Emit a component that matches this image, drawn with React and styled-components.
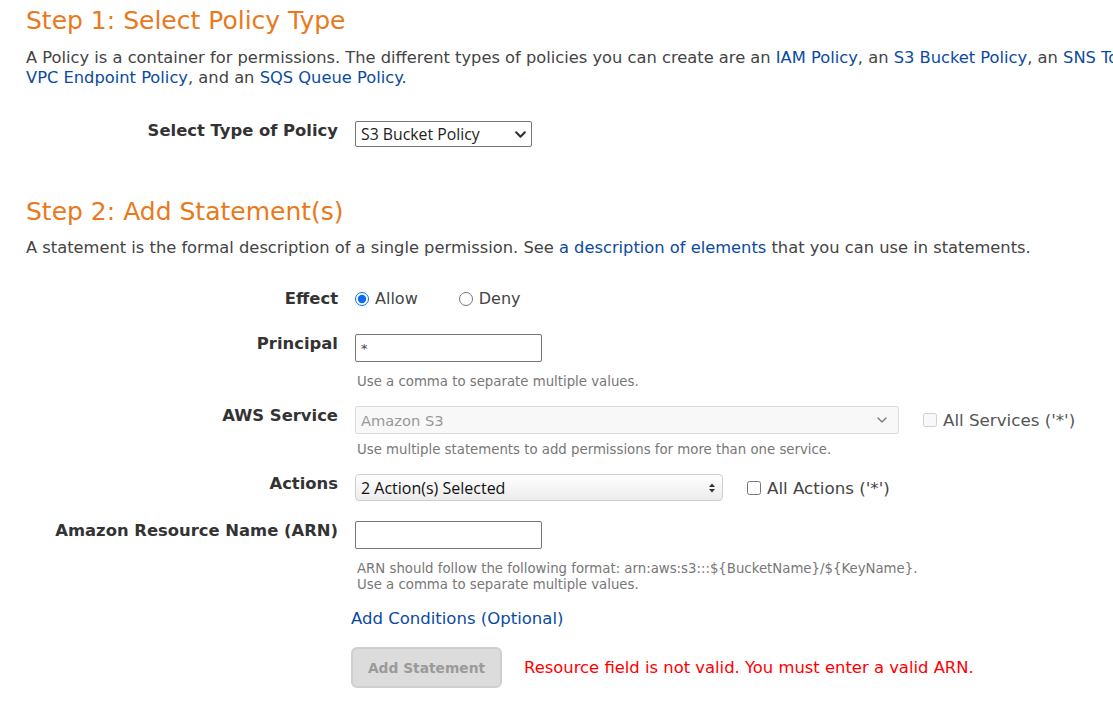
import React from "react";
import styled, { createGlobalStyle } from "styled-components";

const GlobalStyle = createGlobalStyle`
  html, body {
    margin: 0;
    padding: 0;
    overflow: hidden;
    background: #fff;
  }
  body {
    font-family: "DejaVu Sans", Verdana, sans-serif;
    color: #444;
  }
`;

const Page = styled.div`
  width: 1195px;
  padding: 6px 0 0 26px;
`;

const Heading = styled.h2`
  margin: ${(p) => p.$top || 0}px 0 0;
  font-size: 25px;
  line-height: 30px;
  font-weight: normal;
  color: #e8791c;
`;

const Para = styled.p`
  margin: ${(p) => p.$top || 0}px 0 0;
  font-size: 16.3px;
  line-height: 20px;
  color: #444;
`;

const Link = styled.a`
  color: #0b4aa2;
  text-decoration: none;
`;

const Row = styled.div`
  display: grid;
  grid-template-columns: 312px 1fr;
  column-gap: 17px;
  margin-top: ${(p) => p.$top || 0}px;
`;

const Label = styled.div`
  text-align: right;
  font-weight: bold;
  font-size: 16.4px;
  line-height: 20px;
  color: #333;
  white-space: nowrap;
`;

const Field = styled.div`
  display: flex;
  flex-direction: column;
  align-items: flex-start;
`;

const Inline = styled.div`
  display: flex;
  align-items: center;
  gap: ${(p) => p.$gap || 0}px;
`;

const SelectBox = styled.div`
  display: flex;
  align-items: center;
  justify-content: space-between;
  box-sizing: border-box;
  width: ${(p) => p.$w}px;
  height: ${(p) => p.$h || 26}px;
  padding: 0 ${(p) => p.$pr || 4}px 0 5px;
  border: 1px solid ${(p) => p.$border || "#767676"};
  border-radius: ${(p) => p.$radius || 2}px;
  background: ${(p) => p.$bg || "#fff"};
  color: ${(p) => p.$color || "#222"};
  font-family: ${(p) => p.$font || '"Open Sans", sans-serif'};
  font-size: ${(p) => p.$size || 15.8}px;
`;

const TextInput = styled.input`
  box-sizing: border-box;
  width: 187px;
  height: 28px;
  padding: 0 5px;
  border: 1px solid #767676;
  border-radius: 2px;
  font-family: "DejaVu Sans", sans-serif;
  font-size: 13px;
  color: #444;
  outline: none;
`;

const Hint = styled.div`
  margin-top: ${(p) => p.$top || 0}px;
  padding-left: 2px;
  font-size: 13.3px;
  line-height: 16px;
  color: #777;
  white-space: nowrap;
`;

const Choice = styled.label`
  display: inline-flex;
  align-items: center;
  gap: 6px;
  font-size: ${(p) => p.$size || 16}px;
  line-height: 20px;
  color: ${(p) => (p.$muted ? "#555" : "#444")};
  white-space: nowrap;

  input {
    margin: 0;
    width: 14px;
    height: 14px;
    accent-color: #0a6cf0;
  }
`;

const AddLink = styled(Link)`
  display: block;
  margin: 16px 0 0 -4px;
  font-size: 16.5px;
  line-height: 20px;
`;

const ButtonRow = styled.div`
  display: flex;
  align-items: center;
  gap: 22px;
  margin: 18px 0 0 -4px;
`;

const Button = styled.button`
  width: 151px;
  height: 41px;
  border: 2px solid #cfcfcf;
  border-radius: 6px;
  background: #dcdcdc;
  color: #9a9a9a;
  font-family: "DejaVu Sans", sans-serif;
  font-weight: bold;
  font-size: 13.8px;
  cursor: default;
`;

const ErrorText = styled.span`
  color: #f00;
  font-size: 16.4px;
  white-space: nowrap;
`;

const Chevron = ({ color = "#333", size = 13, stroke = 2 }) => (
  <svg width={size} height={size} viewBox="0 0 12 12" fill="none">
    <path d="M2 4l4 4 4-4" stroke={color} strokeWidth={stroke} strokeLinecap="round" strokeLinejoin="round" />
  </svg>
);

const UpDown = () => (
  <svg width="8" height="10" viewBox="0 0 8 10">
    <path d="M4 0.5L7 4H1z" fill="#333" />
    <path d="M4 9.5L7 6H1z" fill="#333" />
  </svg>
);

const App = () => {
  return (
    <Page>
      <GlobalStyle />
      <Heading>Step 1: Select Policy Type</Heading>
      <Para $top={12}>
        A Policy is a container for permissions. The different types of policies you can create are an{" "}
        <Link href="#">IAM Policy</Link>, an <Link href="#">S3 Bucket Policy</Link>, an{" "}
        <Link href="#">SNS Topic Policy</Link>, a <Link href="#">VPC Endpoint Policy</Link>, and an{" "}
        <Link href="#">SQS Queue Policy</Link>.
      </Para>

      <Row $top={33}>
        <Label>Select Type of Policy</Label>
        <Field>
          <SelectBox $w={177} $h={26}>
            <span>S3 Bucket Policy</span>
            <Chevron />
          </SelectBox>
        </Field>
      </Row>

      <Heading $top={50}>Step 2: Add Statement(s)</Heading>
      <Para $top={11}>
        A statement is the formal description of a single permission. See{" "}
        <Link href="#">a description of elements</Link> that you can use in statements.
      </Para>

      <Row $top={31}>
        <Label>Effect</Label>
        <Inline $gap={41}>
          <Choice>
            <input type="radio" name="effect" defaultChecked /> Allow
          </Choice>
          <Choice>
            <input type="radio" name="effect" /> Deny
          </Choice>
        </Inline>
      </Row>

      <Row $top={25}>
        <Label>Principal</Label>
        <Field>
          <TextInput defaultValue="*" />
          <Hint $top={12}>Use a comma to separate multiple values.</Hint>
        </Field>
      </Row>

      <Row $top={16}>
        <Label>AWS Service</Label>
        <Field>
          <Inline $gap={24}>
            <SelectBox
              $w={544}
              $h={28}
              $pr={10}
              $border="#dcdcdc"
              $bg="#f8f8f8"
              $color="#999"
              $font='"DejaVu Sans", sans-serif'
              $size={14.7}
            >
              <span>Amazon S3</span>
              <Chevron color="#777" size={12} stroke={1.3} />
            </SelectBox>
            <Choice $muted $size={16.7}>
              <input type="checkbox" disabled /> All Services ('*')
            </Choice>
          </Inline>
          <Hint $top={8}>Use multiple statements to add permissions for more than one service.</Hint>
        </Field>
      </Row>

      <Row $top={16}>
        <Label>Actions</Label>
        <Inline $gap={24}>
          <SelectBox
            $w={368}
            $h={27}
            $pr={6}
            $border="#cfcfcf"
            $radius={4}
            $bg="linear-gradient(#ffffff, #ececec)"
            $color="#111"
            $size={16}
          >
            <span>2 Action(s) Selected</span>
            <UpDown />
          </SelectBox>
          <Choice $size={16.7}>
            <input type="checkbox" /> All Actions ('*')
          </Choice>
        </Inline>
      </Row>

      <Row $top={20}>
        <Label>Amazon Resource Name (ARN)</Label>
        <Field>
          <TextInput />
          <Hint $top={12}>
            ARN should follow the following format: arn:aws:s3:::$&#123;BucketName&#125;/$&#123;KeyName&#125;.
            <br />
            Use a comma to separate multiple values.
          </Hint>
          <AddLink href="#">Add Conditions (Optional)</AddLink>
          <ButtonRow>
            <Button disabled>Add Statement</Button>
            <ErrorText>Resource field is not valid. You must enter a valid ARN.</ErrorText>
          </ButtonRow>
        </Field>
      </Row>
    </Page>
  );
};

export default App;
